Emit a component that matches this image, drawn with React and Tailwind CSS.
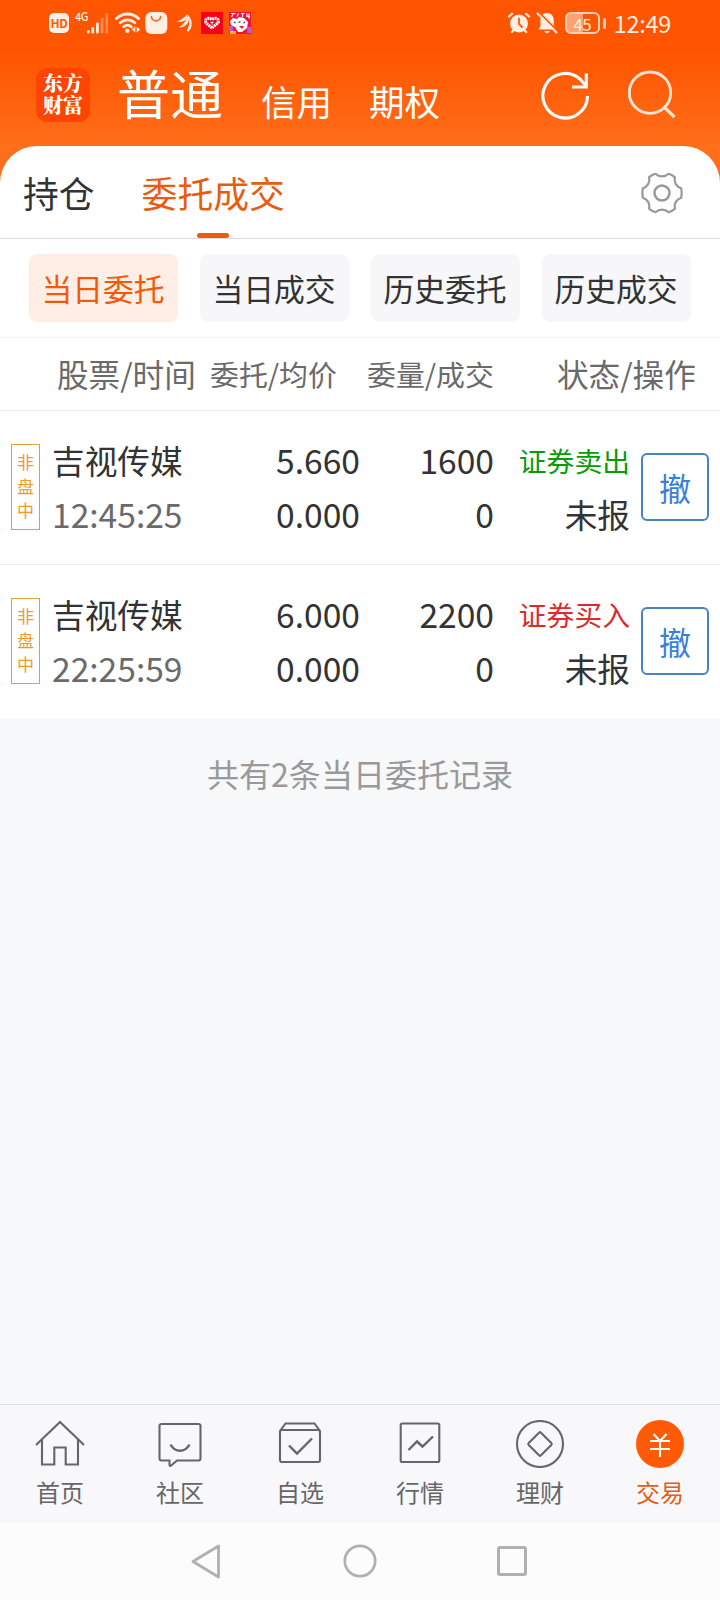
import { useState } from "react";

const orders = [
  { id: 1, name: "吉视传媒", time: "12:45:25", price: "5.660", avg: "0.000", amount: "1600", filled: "0", side: "sell", status: "未报" },
  { id: 2, name: "吉视传媒", time: "22:25:59", price: "6.000", avg: "0.000", amount: "2200", filled: "0", side: "buy", status: "未报" },
];

const filters = ["当日委托", "当日成交", "历史委托", "历史成交"];

function StatusBar() {
  return (
    <div className="flex h-[46px] items-center justify-between pl-[49px] pr-[49px] text-[#ffeee2]">
      <div className="flex items-center">
        <div className="flex h-5 w-5 items-center justify-center rounded-[5px] bg-[#ffeee2] text-[12px] font-bold leading-none tracking-tight text-[#ff5a05]">
          HD
        </div>
        <div className="ml-[6px] flex h-[23px] w-[34px] items-start">
          <span className="w-[12px] text-[11px] font-medium leading-[9px] tracking-tighter">4G</span>
          <svg width="22" height="23" viewBox="0 0 22 23" fill="none" stroke="currentColor" strokeWidth="2.8" strokeLinecap="round">
            <path d="M1.3 19.5v.7M5.8 16.5v3.7M10.4 12v8.2" />
            <path d="M15 7v13.2M19.7 2.3v17.9" opacity="0.35" />
          </svg>
        </div>
        <svg className="ml-[6px]" width="26" height="22" viewBox="0 0 26 22" fill="none" stroke="currentColor" strokeWidth="2.8" strokeLinecap="round">
          <path d="M1.5 6.5c6.5-6 15.5-6 22 0M5.2 10.8c4.3-4 10.3-4 14.6 0M8.8 14.8c2.2-2 5.2-2 7.4 0" />
          <circle cx="12.3" cy="18.8" r="2.2" fill="currentColor" stroke="none" />
          <path d="M20.3 14.5v6l-3.5-3zM21.7 14.5v6l3.5-3z" fill="currentColor" stroke="none" />
        </svg>
        <svg className="ml-[4px]" width="23" height="22" viewBox="0 0 23 22" fill="none">
          <rect x="0.3" y="0" width="22" height="22" rx="6" fill="currentColor" />
          <path d="M6.5 4.5c0 5.8 9 5.8 9 0" stroke="#e8691f" strokeWidth="1.6" strokeLinecap="round" />
        </svg>
        <svg className="ml-[8px]" width="18" height="20" viewBox="0 0 18 20" fill="currentColor">
          <path d="M1 8.500C5 7 8.500 4.500 11.500 1c1 5.500-4 9-10.500 7.500z" />
          <path d="M3 14.500C7 12 10.500 7.500 12.300 2c2.700 6.500-2.300 12.500-9.300 12.500z" />
          <path d="M10.500 18c2-3 3.500-8 2.500-15 4 5 3.500 12-.5 15.500z" />
        </svg>
        <svg className="ml-[7px]" width="22" height="22" viewBox="0 0 22 22">
          <rect width="22" height="22" fill="#f50018" />
          <path d="M11 16 5 10.800C3.200 7.500 7 4.300 11 7.700c4-3.400 7.800-.2 6 3.100z" fill="none" stroke="#fff" strokeWidth="3" strokeDasharray="2 .6" />
          <path d="M9.5 10.500h3M11 9.500v3" stroke="#fff" strokeWidth="1" />
        </svg>
        <svg className="ml-[6px]" width="22" height="22" viewBox="0 0 22 22">
          <rect width="22" height="22" fill="#f0143a" />
          <path d="M2 1.500h4.500M4.500 1.500l-2 3.500M9.500 1.500 8 4.500M12 1.500h3.500M13.500 1.500v3.500M18 1.500v3h3M20 1.500v5" stroke="#fff" strokeWidth="1.2" fill="none" />
          <path d="M1 9l3-3 4 1 2-2 5 1 4 4-1 6-5 4H9l-3-5-4-2z" fill="#fff" />
          <path d="M0 14h4v5H0zM18 15h4v6h-4z" fill="#b75ad8" />
          <path d="M9.5 10.500l2-1M14.500 11l1.500-1M5 10l1.500 1" stroke="#333" strokeWidth="1.1" />
          <path d="M10 14h5l-2 3z" fill="#e8153c" />
          <path d="M1 19h6v3H1z" fill="#ffb52e" />
        </svg>
      </div>

      <div className="flex items-center">
        <svg width="24" height="22" viewBox="0 0 24 22" fill="none" stroke="currentColor" strokeLinecap="round">
          <circle cx="12" cy="11.5" r="9" fill="currentColor" stroke="none" />
          <path d="M2 4.500 5 1.800M22 4.500 19 1.800M4.800 20l1.500-1.500M19.200 20l-1.500-1.500" strokeWidth="2.2" />
          <path d="M12 6.500v5.500l3 3" stroke="#ff5a05" strokeWidth="1.8" />
        </svg>
        <svg className="ml-[5px]" width="22" height="22" viewBox="0 0 22 22" fill="none">
          <path d="M11 1c4.500 0 6.800 3.500 6.800 7.500v5.300l2 3.700H2.500l2-3.700V8.500C4.500 4.500 6.500 1 11 1z" fill="currentColor" />
          <path d="M8.500 19h5c-.5 3-4.500 3-5 0z" fill="currentColor" />
          <path d="M3.500 1 22 19.500" stroke="#ff5a05" strokeWidth="1.8" />
          <path d="M1.500 1.500 20.500 20.500" stroke="currentColor" strokeWidth="2" strokeLinecap="round" />
        </svg>
        <div className="ml-[7px] flex h-[22px] w-[35px] items-center justify-center rounded-[6px] border-2 border-[#ffd2b5] bg-[linear-gradient(90deg,#ffa273_50%,transparent_50%)] text-[17px] leading-none tracking-tight">
          45
        </div>
        <div className="ml-[3px] h-[11px] w-[3px] rounded-sm bg-[#ffd2b5]" />
        <span className="ml-[8px] text-[23.5px] leading-[24px] tracking-[-0.3px]">12:49</span>
      </div>
    </div>
  );
}

function Header() {
  return (
    <div className="flex h-[100px] text-white">
      <div className="ml-9 mt-[22px] flex h-[54px] w-[54px] flex-col items-center justify-center rounded-[11px] bg-[#ff4403] font-['Liberation_Serif','Noto_Serif_CJK_SC','Noto_Sans_CJK_SC',serif] text-[20px] font-black leading-[22px]">
        <span>东方</span>
        <span>财富</span>
      </div>
      <div className="ml-[27px] mt-[10px] text-[53px] leading-[72px]">普通</div>
      <div className="ml-[38px] mt-[35px] text-[35.5px] leading-[40px]">信用</div>
      <div className="ml-[37px] mt-[35px] text-[35.5px] leading-[40px]">期权</div>
      <svg className="ml-[101px] mt-[24px]" width="50" height="50" viewBox="0 0 50 50" fill="none" stroke="currentColor" strokeWidth="3.1">
        <path d="M46.500 26A22.300 22.300 0 1 1 39.500 9.500L45 16" />
        <path d="M45.300 3.500v13.500H31" />
      </svg>
      <svg className="ml-[37px] mt-[24px] text-[#ffe3d3]" width="50" height="50" viewBox="0 0 50 50" fill="none" stroke="currentColor" strokeWidth="2.9">
        <circle cx="22" cy="22.7" r="20.7" />
        <path d="M36.500 37.500 46.500 47" strokeWidth="3.2" />
      </svg>
    </div>
  );
}

function GearIcon() {
  return (
    <svg width="42" height="42" viewBox="0 0 42 42" fill="none" stroke="#999" strokeWidth="2.2" strokeLinejoin="round">
      <path d="M14.500 1.800c3.500 3.500 9.500 3.500 13 0 2.500.6 4.500 1.800 6.500 3.500-1.200 5 1.500 9.500 6.200 11 .5 3 .5 6.400 0 9.400-4.700 1.500-7.400 6-6.200 11-2 1.700-4 2.900-6.500 3.500-3.500-3.500-9.500-3.500-13 0-2.500-.6-4.500-1.800-6.500-3.500 1.200-5-1.500-9.500-6.200-11-.5-3-.5-6.400 0-9.400 4.700-1.500 7.400-6 6.200-11 2-1.700 4-2.900 6.500-3.500z" />
      <circle cx="21" cy="21" r="7.5" strokeWidth="2.5" />
    </svg>
  );
}

function OrderRow({ order }) {
  const selling = order.side === "sell";
  return (
    <div className="flex h-[154px] border-b border-[#ececee] text-[#333] last:border-[#f7f8fa]">
      <div className="ml-[11px] mt-[33px] flex h-[86px] w-[29px] flex-col items-center justify-center border border-[#d9a03c] pb-[2px] text-[17px] leading-[24px] text-[#ef9a28]">
        <span>非</span>
        <span>盘</span>
        <span>中</span>
      </div>
      <div className="ml-[12px] mt-[22px] w-[148px] leading-[54px]">
        <div className="text-[32.7px]">{order.name}</div>
        <div className="text-[33.6px] text-[#6a6a6a]">{order.time}</div>
      </div>
      <div className="mt-[22px] w-[160px] text-right text-[33.6px] leading-[54px]">
        <div>{order.price}</div>
        <div>{order.avg}</div>
      </div>
      <div className="mt-[22px] w-[134px] text-right text-[33.6px] leading-[54px]">
        <div>{order.amount}</div>
        <div>{order.filled}</div>
      </div>
      <div className="mt-[22px] w-[136px] text-right leading-[54px]">
        <div className={`text-[27.8px] ${selling ? "text-[#0a9a0a]" : "text-[#dd2a2a]"}`}>
          {selling ? "证券卖出" : "证券买入"}
        </div>
        <div className="text-[32.7px]">{order.status}</div>
      </div>
      <button className="ml-[11px] mt-[42px] h-[68px] w-[68px] rounded-[6px] border-2 border-[#4584c0] text-[32px] leading-[62px] text-[#3a80d8]">
        撤
      </button>
    </div>
  );
}

const navItems = [
  {
    label: "首页",
    icon: (
      <>
        <path d="M1 25 25 2l24 23" />
        <path d="M7 20v24.500h12.300V27.500h11.400v17H43V20" />
      </>
    ),
  },
  {
    label: "社区",
    icon: (
      <>
        <path d="M6.500 4h37q2 0 2 2v32.500q0 2-2 2H22l-6.500 5.500q-1 0-1-1v-4.500h-8q-2 0-2-2V6q0-2 2-2z" />
        <path d="M15.500 24.500c4.500 8.300 14.500 8.300 19 0" strokeWidth="2.4" />
      </>
    ),
  },
  {
    label: "自选",
    icon: (
      <>
        <rect x="5" y="10" width="40" height="32" rx="2" />
        <path d="M5 11l5.500-7.500h29L45 11" />
        <path d="M14 25.500l8 8 15-15" strokeWidth="2.4" />
      </>
    ),
  },
  {
    label: "行情",
    icon: (
      <>
        <rect x="5.7" y="3.5" width="38.6" height="38.5" rx="1.5" />
        <path d="M13.500 30 22 21.500l5.500 5 10.500-10" strokeWidth="2.4" />
      </>
    ),
  },
  {
    label: "理财",
    icon: (
      <>
        <circle cx="25" cy="24" r="23" />
        <path d="M24 12.700q1-1 2 0l10.300 10.300q1 1 0 2L26 35.300q-1 1-2 0L13.700 25q-1-1 0-2z" />
      </>
    ),
  },
  {
    label: "交易",
    active: true,
    icon: (
      <>
        <circle cx="25" cy="24" r="24" fill="#ff5a05" stroke="none" />
        <path d="M18.500 14l6.500 7 6.500-7M15 21h20M15 29h20M25 21v16" stroke="#fff" />
      </>
    ),
  },
];

function BottomNav() {
  return (
    <div className="grid h-[118px] grid-cols-6 border-t border-[#dfe0e3] bg-[#f8f8fa]">
      {navItems.map((item) => (
        <div
          key={item.label}
          className={`flex flex-col items-center ${item.active ? "text-[#e85c10]" : "text-[#666]"}`}
        >
          <svg className="mt-[15px]" width="50" height="48" viewBox="0 0 50 48" fill="none" stroke="currentColor" strokeWidth="2.1">
            {item.icon}
          </svg>
          <span className="mt-[6px] text-[24px] leading-[36px]">{item.label}</span>
        </div>
      ))}
    </div>
  );
}

function SystemNav() {
  return (
    <div className="flex h-[78px] items-center bg-[#fcfcfc]">
      <svg className="ml-[190px]" width="32" height="36" viewBox="0 0 32 36" fill="none" stroke="#b0b0b0" strokeWidth="2.8" strokeLinejoin="round">
        <path d="M28.500 3v31L3 18.500z" />
      </svg>
      <svg className="ml-[121px]" width="34" height="34" viewBox="0 0 34 34" fill="none" stroke="#b0b0b0" strokeWidth="2.7">
        <circle cx="17" cy="17" r="15.2" />
      </svg>
      <div className="ml-[120px] h-[30px] w-[30px] rounded-[3px] border-[3px] border-[#b0b0b0]" />
    </div>
  );
}

export default function App() {
  const [filter, setFilter] = useState(filters[0]);

  return (
    <div className="flex h-[1600px] w-[720px] flex-col overflow-hidden bg-[#f7f8fa] font-['Noto_Sans_CJK_SC',sans-serif]">
      <div className="h-[188px] bg-[linear-gradient(180deg,#ff5500_0px,#ff5500_52px,#ff6e1a_146px,#ff6e1a_188px)]">
        <StatusBar />
        <Header />
      </div>

      <div className="-mt-[42px] rounded-t-[37px] bg-white">
        <div className="flex h-[93px] border-b border-[#dcdcdc] text-[35.8px]">
          <div className="ml-[23px] pt-[19px] leading-[54px] text-[#333]">持仓</div>
          <div className="ml-[47px] flex flex-col items-center justify-between pt-[19px] text-[#e85c10]">
            <span className="leading-[54px]">委托成交</span>
            <div className="h-[5px] w-8 rounded-full bg-[#f05a08]" />
          </div>
          <div className="ml-auto mr-[37px] mt-[26px]">
            <GearIcon />
          </div>
        </div>

        <div className="flex h-[99px] gap-[22px] border-b border-[#f3f3f5] px-[29px] pt-[15px]">
          {filters.map((f) => (
            <button
              key={f}
              onClick={() => setFilter(f)}
              className={`h-[68px] w-[149px] rounded-[8px] pr-[1px] text-[30.8px] leading-[68px] ${
                f === filter ? "bg-[#ffeee6] text-[#f05a08]" : "bg-[#f7f7fa] text-[#333]"
              }`}
            >
              {f}
            </button>
          ))}
        </div>

        <div className="flex h-[73px] items-center border-b border-[#e9e9eb] text-[#6a6a6a]">
          <span className="ml-[57px] w-[153px] text-[31.6px]">股票/时间</span>
          <span className="w-[157px] text-[28.9px]">委托/均价</span>
          <span className="w-[190px] text-[28.9px]">委量/成交</span>
          <span className="text-[31.6px]">状态/操作</span>
        </div>

        {orders.map((order) => (
          <OrderRow key={order.id} order={order} />
        ))}
      </div>

      <div className="flex-1 pt-[30px] text-center text-[32px] leading-[48px] text-[#999]">
        共有{orders.length}条{filter}记录
      </div>

      <BottomNav />
      <SystemNav />
    </div>
  );
}
